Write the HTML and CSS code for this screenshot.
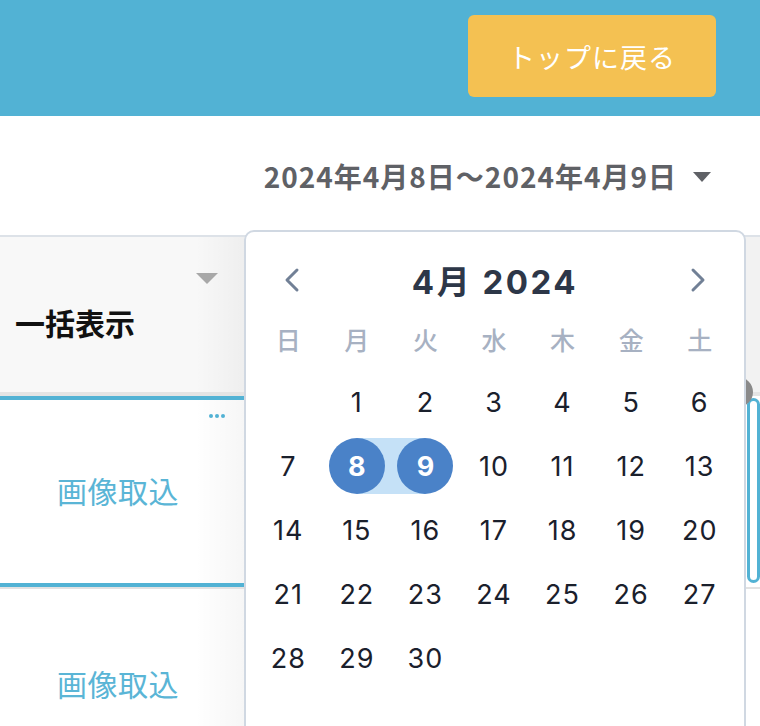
FILE: index.html
```html
<!DOCTYPE html>
<html lang="ja">
<head>
  <meta charset="UTF-8">
  <title>画像取込</title>
  <link rel="stylesheet" href="styles.css">
</head>
<body>

  <header class="topbar">
    <button class="back-btn">トップに戻る</button>
  </header>

  <div class="range-bar">
    <span class="range-text">2024年4月8日〜2024年4月9日</span>
    <span class="caret"></span>
  </div>

  <div class="sheet">
    <div class="head-left">
      <span class="head-caret"></span>
      <span class="head-label">一括表示</span>
    </div>
    <div class="head-right"></div>

    <div class="cell-left selected">
      <span class="dots"><i></i><i></i><i></i></span>
      <span class="import">画像取込</span>
    </div>
    <div class="cell-right">
      <div class="card"><span class="badge"></span></div>
    </div>

    <div class="cell-left next">
      <span class="import">画像取込</span>
    </div>
    <div class="cell-right next"></div>
  </div>

  <!-- カレンダー -->
  <div class="picker">
    <div class="picker-head">
      <svg class="chev" width="18" height="26" viewBox="0 0 18 26"><polyline points="14,3 4,13 14,23" /></svg>
      <span class="month">4月 2024</span>
      <svg class="chev" width="18" height="26" viewBox="0 0 18 26"><polyline points="4,3 14,13 4,23" /></svg>
    </div>
    <div class="weekdays">
      <span>日</span><span>月</span><span>火</span><span>水</span><span>木</span><span>金</span><span>土</span>
    </div>
    <div class="days">
      <span class="day"></span>
      <span class="day">1</span><span class="day">2</span><span class="day">3</span><span class="day">4</span><span class="day">5</span><span class="day">6</span>
      <span class="day">7</span>
      <span class="day range-start"><b>8</b></span>
      <span class="day range-end"><b>9</b></span>
      <span class="day">10</span><span class="day">11</span><span class="day">12</span><span class="day">13</span>
      <span class="day">14</span><span class="day">15</span><span class="day">16</span><span class="day">17</span><span class="day">18</span><span class="day">19</span><span class="day">20</span>
      <span class="day">21</span><span class="day">22</span><span class="day">23</span><span class="day">24</span><span class="day">25</span><span class="day">26</span><span class="day">27</span>
      <span class="day">28</span><span class="day">29</span><span class="day">30</span>
    </div>
  </div>

</body>
</html>
```

FILE: styles.css
```css
html, body {
  margin: 0;
  padding: 0;
  background: #fff;
  font-family: "Noto Sans CJK JP", "Noto Sans", sans-serif;
  overflow: hidden;
}

body {
  position: relative;
  height: 726px;
}

.topbar {
  height: 116px;
  background: #52b2d4;
  display: flex;
  justify-content: flex-end;
  align-items: flex-start;
  padding: 15px 44px 0 0;
  box-sizing: border-box;
}

.back-btn {
  width: 248px;
  height: 82px;
  border: none;
  border-radius: 6px;
  background: #f4c152;
  color: #fff;
  font-family: "Noto Sans CJK JP", sans-serif;
  font-size: 27px;
  letter-spacing: 1px;
}

.range-bar {
  height: 119px;
  display: flex;
  justify-content: flex-end;
  align-items: center;
  gap: 16px;
  padding-right: 49px;
}

.range-text {
  font-size: 28px;
  font-weight: bold;
  color: #5f6166;
  letter-spacing: 1px;
}

.caret {
  width: 0;
  height: 0;
  border-left: 9px solid transparent;
  border-right: 9px solid transparent;
  border-top: 10px solid #5f6166;
  margin-top: 2px;
}

.sheet {
  display: grid;
  grid-template-columns: 244px 1fr;
  border-top: 2px solid #dde2e8;
}

.head-left,
.head-right {
  height: 155px;
  border-bottom: 4px solid #e4e4e4;
  background: #f8f8f8;
}

.head-left {
  display: flex;
  flex-direction: column;
  background: linear-gradient(to right, rgba(0,0,0,0) 80%, rgba(0,0,0,0.04)), #f8f8f8;
}

.head-right {
  background: #f2f2f2;
}

.head-caret {
  align-self: flex-end;
  margin: 36px 26px 0 0;
  width: 0;
  height: 0;
  border-left: 11px solid transparent;
  border-right: 11px solid transparent;
  border-top: 11px solid #a8a8a8;
}

.head-label {
  margin: 18px 0 0 15px;
  font-size: 30px;
  font-weight: bold;
  color: #111;
  line-height: 40px;
}

.cell-left {
  position: relative;
  height: 179px;
  border-top: 4px solid transparent;
  border-bottom: 4px solid transparent;
  display: flex;
  align-items: center;
  justify-content: center;
  padding: 0 8px 4px 0;
  box-sizing: content-box;
  background: linear-gradient(to right, rgba(0,0,0,0) 80%, rgba(0,0,0,0.035)), #fff;
}

.cell-left.selected {
  border-color: #52b2d4;
}

.cell-left.next,
.cell-right.next {
  border-top: 2px solid #e2e2e2;
}

.cell-left.next {
  padding-top: 4px;
  border-bottom: none;
}

.import {
  font-size: 30px;
  color: #5ab5d6;
  letter-spacing: 0.5px;
}

.dots {
  position: absolute;
  top: 14px;
  right: 19px;
  display: flex;
  gap: 2px;
}

.dots i {
  width: 4px;
  height: 4px;
  border-radius: 50%;
  background: #52b2d4;
}

.cell-right {
  height: 191px;
}

.card {
  position: relative;
  margin: 2px 0 0 503px;
  height: 179px;
  border: 3px solid #52b2d4;
  border-radius: 14px;
}

.badge {
  position: absolute;
  top: -24px;
  left: -27px;
  width: 30px;
  height: 30px;
  border-radius: 50%;
  background: #8a8a8a;
}

/* カレンダー */
.picker {
  position: absolute;
  top: 230px;
  left: 244px;
  width: 502px;
  height: 520px;
  box-sizing: border-box;
  background: #fff;
  border: 2px solid #d0d8e2;
  border-radius: 10px;
  padding: 20px 10px 0 8px;
  font-family: Inter, "Noto Sans CJK JP", sans-serif;
  z-index: 5;
}

.picker-head {
  height: 56px;
  display: flex;
  align-items: center;
  justify-content: space-between;
  padding: 0 27px 0 29px;
}

.chev polyline {
  fill: none;
  stroke: #718096;
  stroke-width: 3;
  stroke-linecap: round;
  stroke-linejoin: round;
}

.month {
  font-size: 33px;
  font-weight: bold;
  color: #2d3748;
  letter-spacing: 2.5px;
}

.weekdays {
  display: grid;
  grid-template-columns: repeat(7, 1fr);
  height: 40px;
  margin-top: 11px;
  align-items: center;
  text-align: center;
  font-family: "Noto Sans CJK JP", sans-serif;
  font-size: 25px;
  font-weight: 500;
  color: #a7b1c2;
}

.days {
  display: grid;
  grid-template-columns: repeat(7, 1fr);
  grid-auto-rows: 64px;
  margin-top: 11px;
}

.day {
  position: relative;
  display: flex;
  align-items: center;
  justify-content: center;
  font-size: 27px;
  color: #1a202c;
  letter-spacing: 1px;
}

.day b {
  position: relative;
  z-index: 1;
  width: 56px;
  height: 56px;
  border-radius: 50%;
  background: #4a82c8;
  color: #fff;
  display: flex;
  align-items: center;
  justify-content: center;
  font-weight: bold;
  letter-spacing: 0;
}

.range-start::before,
.range-end::before {
  content: "";
  position: absolute;
  top: 4px;
  bottom: 4px;
  background: #c5e1f7;
}

.range-start::before {
  left: 50%;
  right: 0;
}

.range-end::before {
  left: 0;
  right: 50%;
}
```
